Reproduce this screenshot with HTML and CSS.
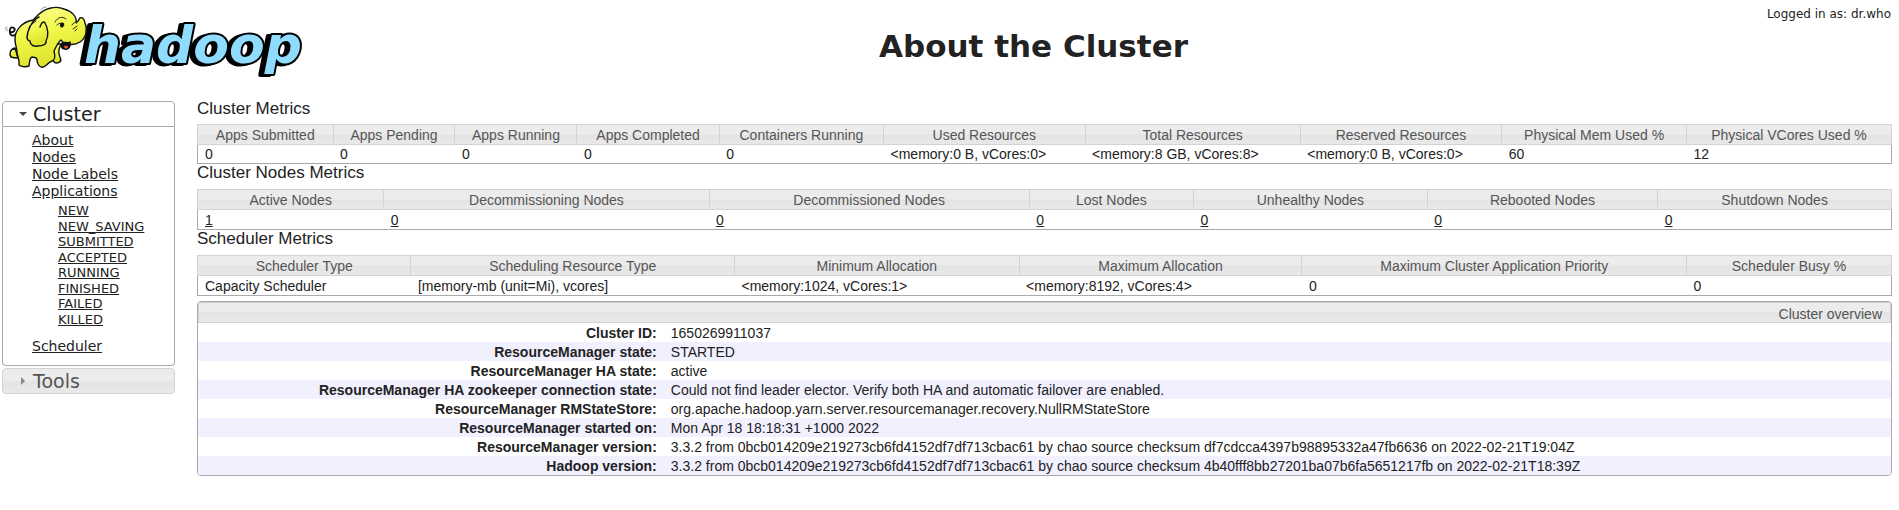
FILE: index.html
```html
<!DOCTYPE html>
<html lang="en">
<head>
<meta charset="utf-8">
<title>About the Cluster</title>
<link rel="stylesheet" href="styles.css">
</head>
<body>
<div class="layout">
  <header class="banner">
    <a class="logo" href="#" aria-label="Hadoop">
      <svg class="logo-art" viewBox="0 0 310 85" role="img" aria-hidden="true">
        <defs>
          <linearGradient id="hide" x1="0" y1="0" x2="0.3" y2="1">
            <stop offset="0" stop-color="#fbff9a"/>
            <stop offset="0.45" stop-color="#f2f94e"/>
            <stop offset="1" stop-color="#dde32a"/>
          </linearGradient>
        </defs>
        <text class="word" x="84" y="63">hadoop</text>
        <g fill="url(#hide)" stroke="#111" stroke-width="1.4" stroke-linejoin="round" stroke-linecap="round">
          <path d="M17 33C15 36 11 37 10 33C9 29 11 26 14 28C16 30 13 33 11 32" fill="none" stroke-width="1.8"/>
          <path d="M15 48C10 49 9 54 11 57C13 58 16 58 18 58Z"/>
          <path d="M50 54C52 58 52 62 56 63C60 63 62 61 60 57C58 53 59 48 61 44L54 44Z"/>
          <path d="M33 20C22 22 15 30 15 39C15 45 17 48 17 52C17 57 20 59 19 65C22 67 26 67 29 66C30 62 29 58 32 57C35 58 37 57 37 60C37 64 40 68 43 67C46 67 47 63 52 61C56 60 55 55 54 51C56 47 58 42 61 40C64 45 74 46 80 42C86 38 88 30 85 23C84 18 82 17 80 18C78 20 79 22 76 22C77 17 72 11 64 9C55 5 44 9 38 15Z"/>
          <path d="M39 17C32 20 27 31 27 38C28 41 30 41 30 41C30 45 34 47 38 46C43 46 47 44 46 41C49 36 48 28 45 23C43 20 41 24 40 27"/>
          <path d="M62 43C64 41 67 44 70 42C71 46 69 50 65 49C61 49 60 45 62 43Z" fill="#111"/>
          <path d="M64 47C65 45 68 46 68 47C67 49 65 49 64 47Z" fill="#f05a3c" stroke="none"/>
          <path d="M55 22C58 17 62 16 66 19M57 25C60 22 63 23 64 25" fill="none" stroke-width="0.9"/>
          <ellipse cx="62" cy="25" rx="2" ry="2.6" fill="#111" stroke="none" transform="rotate(20 62 25)"/>
          <path d="M72 25C73 23 75 22 77 23M73 29L77 26M75 31L77 29M32 24L36 21M29 27L31 25" fill="none" stroke-width="0.9"/>
          <path d="M41 10C42 8 44 7 46 7M5 29C5 28 6 27 7 27M7 31L7 29" fill="none" stroke="#777" stroke-width="0.8"/>
        </g>
      </svg>
    </a>
    <h1>About the Cluster</h1>
    <div class="user">Logged in as: dr.who</div>
  </header>

  <nav class="side">
    <section class="fold open">
      <h2><button type="button" aria-expanded="true"><span class="arrow down"></span>Cluster</button></h2>
      <div class="fold-body">
        <ul class="links">
          <li><a href="#">About</a></li>
          <li><a href="#">Nodes</a></li>
          <li><a href="#">Node Labels</a></li>
          <li><a href="#">Applications</a>
            <ul class="states">
              <li><a href="#">NEW</a></li>
              <li><a href="#">NEW_SAVING</a></li>
              <li><a href="#">SUBMITTED</a></li>
              <li><a href="#">ACCEPTED</a></li>
              <li><a href="#">RUNNING</a></li>
              <li><a href="#">FINISHED</a></li>
              <li><a href="#">FAILED</a></li>
              <li><a href="#">KILLED</a></li>
            </ul>
          </li>
          <li><a href="#">Scheduler</a></li>
        </ul>
      </div>
    </section>
    <section class="fold">
      <h2><button type="button" aria-expanded="false"><span class="arrow right"></span>Tools</button></h2>
    </section>
  </nav>

  <main class="content">
    <h3>Cluster Metrics</h3>
    <table class="metrics apps">
      <thead><tr><th>Apps Submitted</th><th>Apps Pending</th><th>Apps Running</th><th>Apps Completed</th><th>Containers Running</th><th>Used Resources</th><th>Total Resources</th><th>Reserved Resources</th><th>Physical Mem Used %</th><th>Physical VCores Used %</th></tr></thead>
      <tbody><tr><td>0</td><td>0</td><td>0</td><td>0</td><td>0</td><td>&lt;memory:0 B, vCores:0&gt;</td><td>&lt;memory:8 GB, vCores:8&gt;</td><td>&lt;memory:0 B, vCores:0&gt;</td><td>60</td><td>12</td></tr></tbody>
    </table>
    <h3>Cluster Nodes Metrics</h3>
    <table class="metrics nodes">
      <thead><tr><th>Active Nodes</th><th>Decommissioning Nodes</th><th>Decommissioned Nodes</th><th>Lost Nodes</th><th>Unhealthy Nodes</th><th>Rebooted Nodes</th><th>Shutdown Nodes</th></tr></thead>
      <tbody><tr><td><a href="#">1</a></td><td><a href="#">0</a></td><td><a href="#">0</a></td><td><a href="#">0</a></td><td><a href="#">0</a></td><td><a href="#">0</a></td><td><a href="#">0</a></td></tr></tbody>
    </table>
    <h3>Scheduler Metrics</h3>
    <table class="metrics sched">
      <thead><tr><th>Scheduler Type</th><th>Scheduling Resource Type</th><th>Minimum Allocation</th><th>Maximum Allocation</th><th>Maximum Cluster Application Priority</th><th>Scheduler Busy %</th></tr></thead>
      <tbody><tr><td>Capacity Scheduler</td><td>[memory-mb (unit=Mi), vcores]</td><td>&lt;memory:1024, vCores:1&gt;</td><td>&lt;memory:8192, vCores:4&gt;</td><td>0</td><td>0</td></tr></tbody>
    </table>
    <div class="overview">
      <div class="overview-title">Cluster overview</div>
      <table class="facts">
        <tbody>
          <tr><th scope="row">Cluster ID:</th><td>1650269911037</td></tr>
          <tr><th scope="row">ResourceManager state:</th><td>STARTED</td></tr>
          <tr><th scope="row">ResourceManager HA state:</th><td>active</td></tr>
          <tr><th scope="row">ResourceManager HA zookeeper connection state:</th><td>Could not find leader elector. Verify both HA and automatic failover are enabled.</td></tr>
          <tr><th scope="row">ResourceManager RMStateStore:</th><td>org.apache.hadoop.yarn.server.resourcemanager.recovery.NullRMStateStore</td></tr>
          <tr><th scope="row">ResourceManager started on:</th><td>Mon Apr 18 18:18:31 +1000 2022</td></tr>
          <tr><th scope="row">ResourceManager version:</th><td>3.3.2 from 0bcb014209e219273cb6fd4152df7df713cbac61 by chao source checksum df7cdcca4397b98895332a47fb6636 on 2022-02-21T19:04Z</td></tr>
          <tr><th scope="row">Hadoop version:</th><td>3.3.2 from 0bcb014209e219273cb6fd4152df7df713cbac61 by chao source checksum 4b40fff8bb27201ba07b6fa5651217fb on 2022-02-21T18:39Z</td></tr>
        </tbody>
      </table>
    </div>
  </main>
</div>
</body>
</html>
```
FILE: styles.css
```css
* { box-sizing: border-box; }
body {
  margin: 0;
  background: #fff;
  color: #222;
  font-family: Verdana, "DejaVu Sans", sans-serif;
}
h1, h2, h3, ul { margin: 0; padding: 0; font-weight: normal; }
ul { list-style: none; }
a { color: #222; }

.layout {
  display: grid;
  grid-template-columns: 173px 1fr;
  grid-template-areas: "banner banner" "side content";
  column-gap: 22px;
  padding: 0 7px 0 2px;
}

/* Banner */
.banner {
  grid-area: banner;
  display: grid;
  grid-template-columns: 173px 1fr;
  height: 100px;
  position: relative;
}
.logo { display: block; margin-left: -2px; }
.logo-art { display: block; width: 310px; height: 85px; }
.word {
  font-family: "DejaVu Sans", sans-serif;
  font-weight: bold;
  font-style: oblique;
  font-size: 52px;
  fill: #8fdcff;
  stroke: #000;
  stroke-width: 4px;
  stroke-linejoin: round;
  paint-order: stroke;
  filter: drop-shadow(-4px 1px 0 #000);
}
.banner h1 {
  padding-top: 26px;
  text-align: center;
  font-size: 31px;
  line-height: 40px;
  font-weight: bold;
}
.user { position: absolute; top: 6px; right: 1px; font-size: 12px; line-height: 16px; }

/* Sidebar */
.side { grid-area: side; padding-top: 1px; }
.fold { margin-bottom: 2px; }
.fold h2 { display: flex; }
.fold button {
  display: flex;
  align-items: center;
  width: 100%;
  height: 26px;
  padding: 0 0 0 16px;
  border: 1px solid #d3d3d3;
  border-radius: 4px;
  background: linear-gradient(#ececec 50%, #e4e4e4 50%, #e9e9e9);
  color: #555;
  font-family: inherit;
  font-size: 19px;
  line-height: 24px;
}
.open button {
  border-color: #aaa;
  border-radius: 4px 4px 0 0;
  background: #fff;
  color: #212121;
}
.arrow { width: 14px; }
.arrow::before { content: ""; display: block; width: 0; border: 4px solid transparent; }
.down::before { border-width: 4px 4px 0; border-top-color: #454545; }
.right::before { margin-left: 2px; border-width: 4px 0 4px 4px; border-left-color: #888; }
.fold-body {
  border: 1px solid #aaa;
  border-top: 0;
  border-radius: 0 0 4px 4px;
  padding: 5px 0 10px 29px;
}
.links { font-size: 14px; line-height: 17px; }
.states {
  display: flex;
  flex-direction: column;
  min-height: 124px;
  margin: 3px 0 11px 26px;
  font-size: 13px;
  line-height: 15px;
}
.states li { flex: 1; }

/* Metrics */
.content {
  grid-area: content;
  font-family: Arial, "Liberation Sans", sans-serif;
  font-size: 14px;
}
.content h3 { height: 24px; font-size: 17px; line-height: 18px; }
.content h3:not(:first-child) { height: 25px; }
.metrics {
  width: 100%;
  table-layout: fixed;
  border-collapse: collapse;
  border: 1px solid #aaa;
}
.metrics th {
  padding: 2px 0 0;
  border: 1px solid #d3d3d3;
  background: linear-gradient(#ececec 50%, #e4e4e4 50%, #e9e9e9);
  color: #555;
  font-weight: normal;
  line-height: 17px;
}
.metrics td { padding: 1px 0 0 7px; line-height: 17px; white-space: nowrap; }
.nodes td, .sched td { padding-top: 2px; }

.apps th:nth-child(1) { width: 8%; }
.apps th:nth-child(2) { width: 7.2%; }
.apps th:nth-child(3) { width: 7.2%; }
.apps th:nth-child(4) { width: 8.4%; }
.apps th:nth-child(5) { width: 9.7%; }
.apps th:nth-child(6) { width: 11.9%; }
.apps th:nth-child(7) { width: 12.7%; }
.apps th:nth-child(8) { width: 11.9%; }
.apps th:nth-child(9) { width: 10.9%; }

.nodes th:nth-child(1) { width: 11%; }
.nodes th:nth-child(2) { width: 19.2%; }
.nodes th:nth-child(3) { width: 18.9%; }
.nodes th:nth-child(4) { width: 9.7%; }
.nodes th:nth-child(5) { width: 13.8%; }
.nodes th:nth-child(6) { width: 13.6%; }

.sched th:nth-child(1) { width: 12.6%; }
.sched th:nth-child(2) { width: 19.1%; }
.sched th:nth-child(3) { width: 16.8%; }
.sched th:nth-child(4) { width: 16.7%; }
.sched th:nth-child(5) { width: 22.7%; }

/* Overview */
.overview {
  margin-top: 5px;
  border: 1px solid #aaa;
  border-radius: 4px;
  overflow: hidden;
}
.overview-title {
  padding: 3px 8px 0 0;
  border: 1px solid #d3d3d3;
  border-top-color: #ccc;
  background: linear-gradient(#ececec 50%, #e4e4e4 50%, #e9e9e9);
  color: #555;
  text-align: right;
  line-height: 16px;
}
.facts { width: 100%; border-collapse: collapse; }
.facts th, .facts td { padding: 2px 0 0; line-height: 17px; }
.facts th { width: 27.1%; text-align: right; }
.facts td { padding-left: 14px; }
.facts tr:nth-child(even) { background: #f1f0ff; }
```
